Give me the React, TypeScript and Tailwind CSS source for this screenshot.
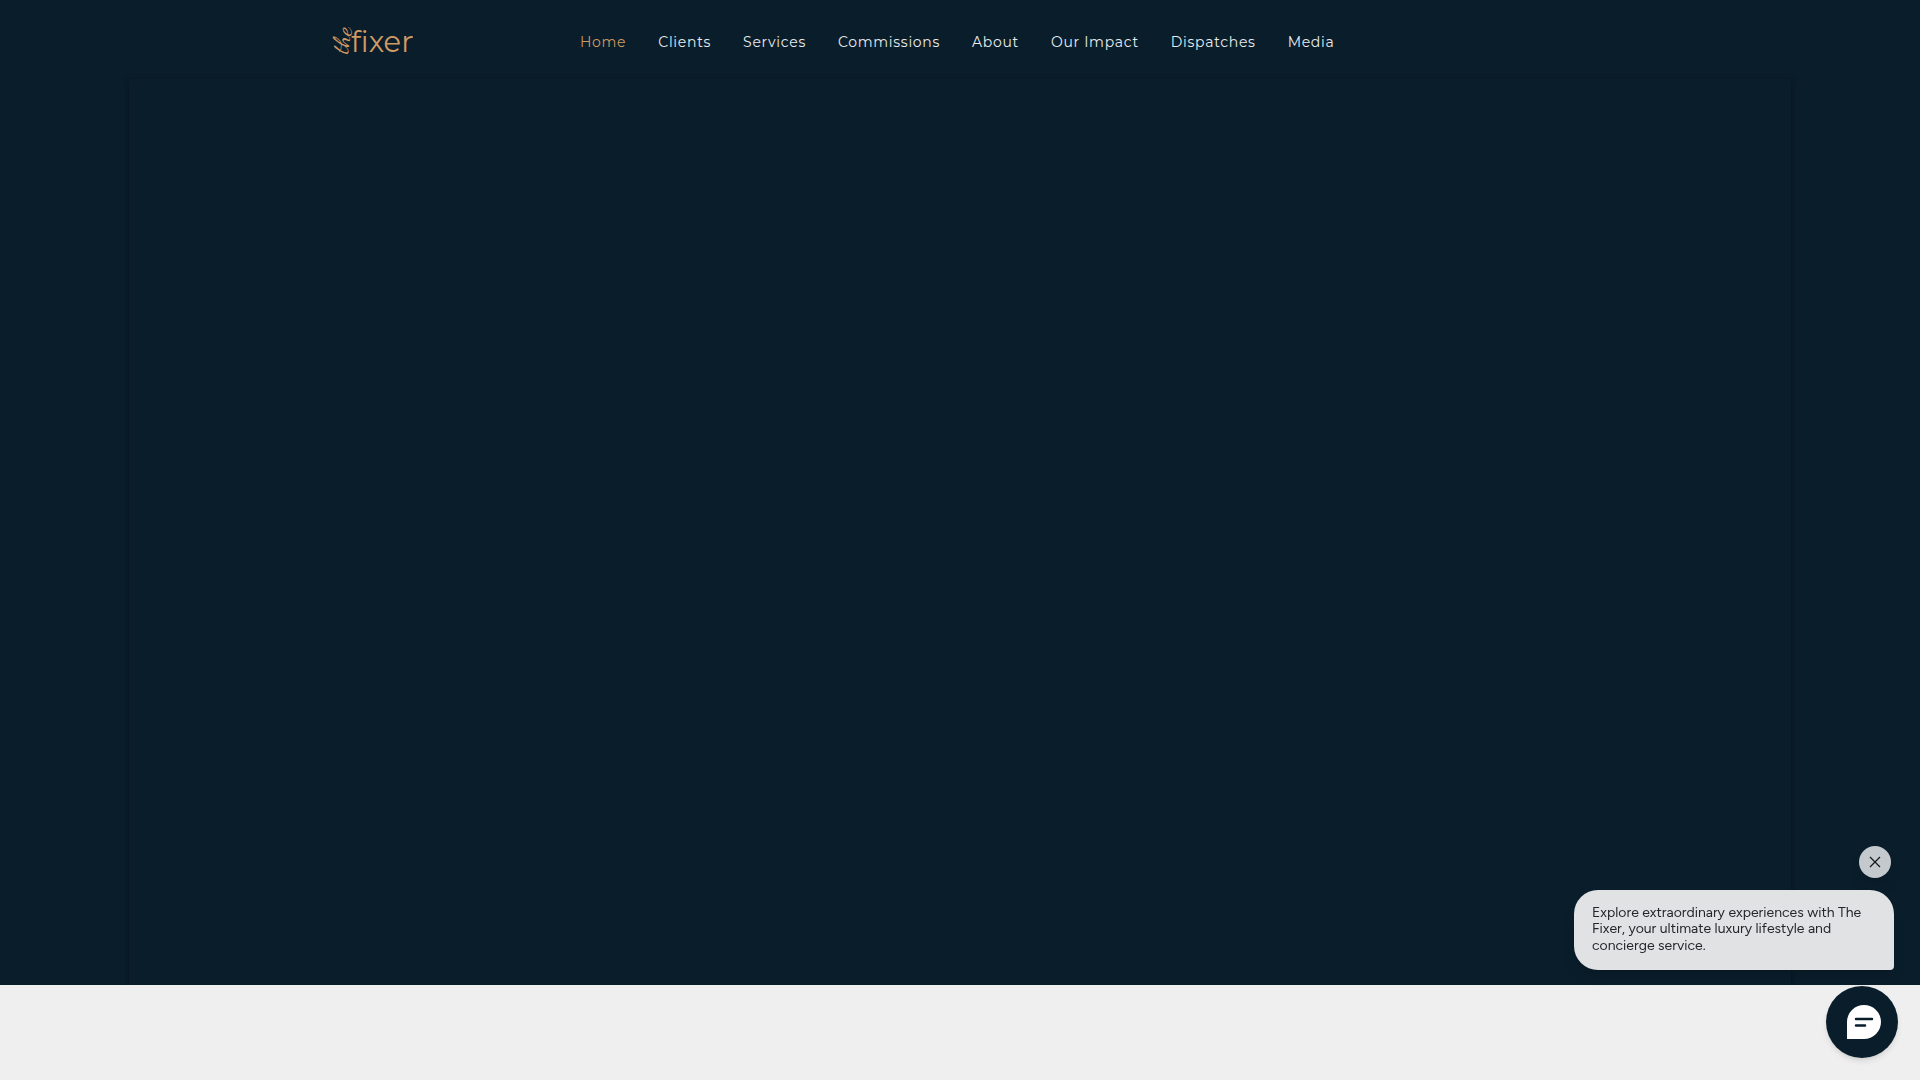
const links = [
  "Home",
  "Clients",
  "Services",
  "Commissions",
  "About",
  "Our Impact",
  "Dispatches",
  "Media",
];

function Logo() {
  return (
    <svg viewBox="0 0 84 32" className="h-8 w-[84px] overflow-visible fill-[#d09a64]" role="img" aria-label="the fixer">
      <text
        transform="translate(17 28) rotate(-80)"
        className="font-['Dancing_Script','Lato',cursive] text-[24px]"
      >
        the
      </text>
      <text x="21" y="26" className="font-['Montserrat','Lato',sans-serif] text-[29px] [font-variant-ligatures:none]">
        fixer
      </text>
      <circle cx="82" cy="11" r="1" />
    </svg>
  );
}

function Header() {
  return (
    <header className="mx-auto flex h-[79px] w-full max-w-[1260px] items-center pt-1">
      <a href="#home" className="block w-[250px] shrink-0">
        <Logo />
      </a>
      <nav aria-label="Main">
        <ul className="flex gap-8 font-['Montserrat','Inter',sans-serif] text-sm tracking-wider whitespace-nowrap">
          {links.map((label, i) => (
            <li key={label}>
              <a href="#home" className={i === 0 ? "text-[#d09a64]" : "text-[#e8ecee]"}>
                {label}
              </a>
            </li>
          ))}
        </ul>
      </nav>
    </header>
  );
}

function ChatWidget() {
  return (
    <aside className="fixed right-[22px] bottom-[22px] flex flex-col items-end">
      <button
        type="button"
        aria-label="Dismiss message"
        className="mr-[7px] mb-3 flex size-8 items-center justify-center rounded-full bg-[#c4c9cd] shadow-lg"
      >
        <svg viewBox="0 0 12 12" className="size-3 stroke-[#15181b]" strokeWidth="1.2">
          <path d="M1 1L11 11M11 1L1 11" />
        </svg>
      </button>
      <p className="mr-1 mb-4 w-80 rounded-3xl rounded-br-[4px] bg-[#e0e2e4] px-[18px] py-[15px] font-['Figtree','Inter',sans-serif] text-sm leading-[1.2] text-[#24272a] shadow-lg">
        Explore extraordinary experiences with The Fixer, your ultimate luxury lifestyle and concierge service.
      </p>
      <button
        type="button"
        aria-label="Open chat"
        className="flex size-[72px] items-center justify-center rounded-full bg-[#0a1d2b] pl-1 shadow-md"
      >
        <svg viewBox="0 0 34 34" className="size-[34px]">
          <path d="M0 34V17A17 17 0 1 1 17 34Z" fill="#fff" />
          <path d="M9 14H25M9 20.500H18" stroke="#0a1d2b" strokeWidth="2.500" strokeLinecap="round" />
        </svg>
      </button>
    </aside>
  );
}

export default function App() {
  return (
    <div className="flex min-h-screen flex-col bg-[#efefef]">
      <div className="flex flex-1 flex-col overflow-hidden bg-[#0a1d2b]">
        <Header />
        <main className="mx-auto w-full max-w-[1662px] flex-1 bg-[#0a1d2b] shadow-[0_2px_6px_rgba(0,0,0,0.4)]" />
      </div>
      <footer className="h-[95px] shrink-0" />
      <ChatWidget />
    </div>
  );
}
